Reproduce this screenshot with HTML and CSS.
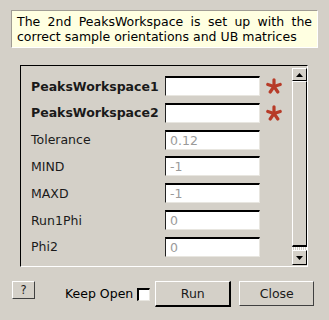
FILE: index.html
```html
<!DOCTYPE html>
<html>
<head>
<meta charset="utf-8">
<link rel="stylesheet" href="styles.css">
</head>
<body>
<div class="dialog">
  <div class="desc">The 2nd PeaksWorkspace is set up with the correct sample orientations and UB matrices</div>
  <div class="frame">
    <div class="fields">
      <div class="row"><span class="label bold">PeaksWorkspace1</span><span class="input"></span><svg class="star" viewBox="0 0 16 16" width="16" height="16"><g stroke="#b73b28" stroke-width="3.2" stroke-linecap="round"><line x1="8" y1="8.5" x2="8" y2="1.8"/><line x1="8" y1="8.5" x2="14.2" y2="6.5"/><line x1="8" y1="8.5" x2="11.8" y2="14"/><line x1="8" y1="8.5" x2="4.2" y2="14"/><line x1="8" y1="8.5" x2="1.8" y2="6.5"/></g></svg></div>
      <div class="row"><span class="label bold">PeaksWorkspace2</span><span class="input"></span><svg class="star" viewBox="0 0 16 16" width="16" height="16"><g stroke="#b73b28" stroke-width="3.2" stroke-linecap="round"><line x1="8" y1="8.5" x2="8" y2="1.8"/><line x1="8" y1="8.5" x2="14.2" y2="6.5"/><line x1="8" y1="8.5" x2="11.8" y2="14"/><line x1="8" y1="8.5" x2="4.2" y2="14"/><line x1="8" y1="8.5" x2="1.8" y2="6.5"/></g></svg></div>
      <div class="row"><span class="label">Tolerance</span><span class="input">0.12</span></div>
      <div class="row"><span class="label">MIND</span><span class="input">-1</span></div>
      <div class="row"><span class="label">MAXD</span><span class="input">-1</span></div>
      <div class="row"><span class="label">Run1Phi</span><span class="input">0</span></div>
      <div class="row"><span class="label">Phi2</span><span class="input">0</span></div>
    </div>
    <div class="scrollbar">
      <div class="sbtn"><svg width="7" height="4" viewBox="0 0 7 4"><polygon points="0,4 7,4 3.5,0" fill="#000"/></svg></div>
      <div class="thumb"></div>
      <div class="track"></div>
      <div class="sbtn down"><svg width="7" height="4" viewBox="0 0 7 4"><polygon points="0,0 7,0 3.5,4" fill="#000"/></svg></div>
    </div>
  </div>
  <div class="buttons">
    <div class="btn help">?</div>
    <span class="keep">Keep Open</span>
    <span class="check"></span>
    <div class="btn run">Run</div>
    <div class="btn close">Close</div>
  </div>
</div>
</body>
</html>
```
FILE: styles.css
```css
html, body {
  margin: 0;
  padding: 0;
  background: #d4d0c8;
}
.dialog {
  width: 329px;
  height: 320px;
  font-family: "DejaVu Sans", sans-serif;
  font-size: 12.5px;
  color: #000;
  padding-top: 10px;
  box-sizing: border-box;
}
.desc {
  margin: 0 11px 0 11px;
  height: 38px;
  box-sizing: border-box;
  border: 1px solid;
  border-color: #a09c94 #ffffff #ffffff #a09c94;
  background: #ffffe1;
  padding: 3px 5px 0 5px;
  line-height: 15px;
  text-align: justify;
  text-align-last: left;
}
.frame {
  margin: 17px 21px 0 20px;
  height: 202px;
  box-sizing: border-box;
  border: 1px solid;
  border-color: #000 #fff #fff #000;
  display: flex;
}
.fields {
  flex: 1;
  padding: 10px 0 0 10px;
  display: flex;
  flex-direction: column;
  gap: 6.83px;
}
.row {
  display: flex;
  align-items: center;
  height: 20px;
}
.label {
  width: 134px;
  color: #1a1a1a;
}
.bold {
  font-weight: bold;
}
.input {
  width: 95px;
  height: 20px;
  box-sizing: border-box;
  background: #fff;
  border: 2px solid;
  border-color: #000 #e8e6e0 #e8e6e0 #222;
  border-top-width: 2px;
  border-left-width: 1px;
  border-right-width: 1px;
  border-bottom-width: 1px;
  color: #9a9a9a;
  padding-left: 4px;
  line-height: 17px;
}
.star {
  margin-left: 6px;
}
.scrollbar {
  width: 15px;
  margin: 2px 0 1px 0;
  display: flex;
  flex-direction: column;
}
.sbtn {
  height: 13px;
  box-sizing: border-box;
  border: 1px solid;
  border-color: #fff #000 #000 #fff;
  display: flex;
  align-items: center;
  justify-content: center;
}
.sbtn.down {
  height: 15px;
}
.thumb {
  flex: 1;
  box-sizing: border-box;
  border: 1px solid;
  border-color: #fff #000 #000 #fff;
  border-bottom-width: 2px;
}
.track {
  height: 3px;
  background-image: repeating-linear-gradient(90deg, #fff 0 1px, #d4d0c8 1px 2px);
}
.buttons {
  display: flex;
  align-items: flex-start;
  margin: 14px 0 0 12px;
}
.btn {
  box-sizing: border-box;
  border: 1px solid;
  border-color: #fff #404040 #404040 #fff;
  display: flex;
  align-items: center;
  justify-content: center;
  color: #1a1a1a;
}
.help {
  width: 23px;
  height: 18px;
  font-size: 11.5px;
}
.keep {
  margin: 6px 0 0 30px;
  line-height: 14px;
}
.check {
  width: 13px;
  height: 13px;
  box-sizing: border-box;
  background: #fff;
  border: 1px solid;
  border-color: #000 #e8e6e0 #e8e6e0 #000;
  border-top-width: 2px;
  border-left-width: 2px;
  margin: 7px 0 0 4px;
}
.run {
  width: 76px;
  height: 26px;
  margin-left: 5px;
  border-color: #fff #000 #000 #fff;
  border-width: 1px 2px 2px 1px;
}
.close {
  width: 75px;
  height: 25px;
  margin-left: 8px;
}
```
